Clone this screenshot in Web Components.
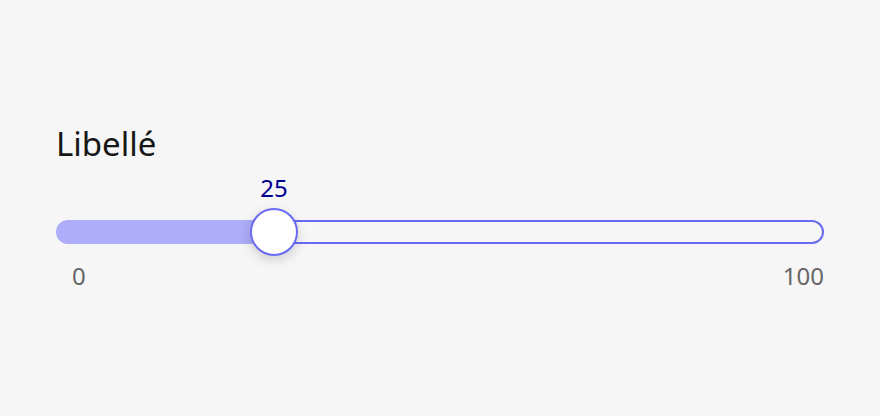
<!DOCTYPE html>
<html lang="fr">
<head>
<meta charset="utf-8">
<title>Curseur</title>
<style>
  body { margin: 0; background: #f6f6f6; color: #161616; font-family: "Noto Sans", sans-serif; }
</style>
</head>
<body>
<demo-panel><range-field label="Libellé" min="0" max="100" value="25"></range-field></demo-panel>
<script>
class DemoPanel extends HTMLElement {
  constructor() {
    super();
    this.attachShadow({ mode: "open" }).innerHTML = `
      <style>
        :host { display: flex; flex-direction: column; justify-content: center; box-sizing: border-box; min-height: 100vh; padding: 56px; }
      </style>
      <slot></slot>`;
  }
}
customElements.define("demo-panel", DemoPanel);

class RangeField extends HTMLElement {
  connectedCallback() {
    if (this.shadowRoot) return;
    const { label, min, max, value } = Object.fromEntries([...this.attributes].map(a => [a.name, a.value]));
    this.attachShadow({ mode: "open" }).innerHTML = `
      <style>
        :host { display: block; padding-bottom: 4px; --thumb-x: calc(16px + (100% - 56px) * var(--ratio)); }
        label { display: block; font-size: 33px; line-height: 48px; }
        output { display: block; box-sizing: border-box; width: 48px; margin-top: 4px; margin-left: var(--thumb-x);
          text-align: center; font-size: 24px; line-height: 32px; color: #000091; }
        .slider { display: grid; align-items: center; margin-top: 4px; }
        .slider > * { grid-area: 1 / 1; }
        .track { box-sizing: border-box; height: 24px; border: 2px solid #6a6af4; border-radius: 12px;
          clip-path: inset(0 0 0 calc(var(--thumb-x) + 24px)); }
        .fill { height: 24px; width: calc(var(--thumb-x) + 24px); background: #adadf9; border-radius: 12px 0 0 12px; }
        input { z-index: 1; appearance: none; height: 48px; min-width: 0; margin: 0 -8px 0 16px; background: none; outline-offset: 4px; }
        input::-webkit-slider-thumb { appearance: none; box-sizing: border-box; width: 48px; height: 48px; border: 2px solid #6a6af4;
          border-radius: 50%; background: #fff; box-shadow: 0 4px 12px rgba(0, 0, 18, .16); }
        .limits { display: flex; justify-content: space-between; padding-left: 16px; margin-top: 4px;
          font-size: 24px; line-height: 32px; color: #666; }
      </style>
      <label for="range">${label}</label>
      <output for="range">${value}</output>
      <div class="slider">
        <div class="track"></div>
        <div class="fill"></div>
        <input id="range" type="range" min="${min}" max="${max}" value="${value}">
      </div>
      <div class="limits" aria-hidden="true"><span>${min}</span><span>${max}</span></div>`;
    const input = this.shadowRoot.querySelector("input");
    const output = this.shadowRoot.querySelector("output");
    const update = () => {
      output.textContent = input.value;
      this.style.setProperty("--ratio", (input.value - min) / (max - min));
    };
    input.addEventListener("input", update);
    update();
  }
}
customElements.define("range-field", RangeField);
</script>
</body>
</html>
